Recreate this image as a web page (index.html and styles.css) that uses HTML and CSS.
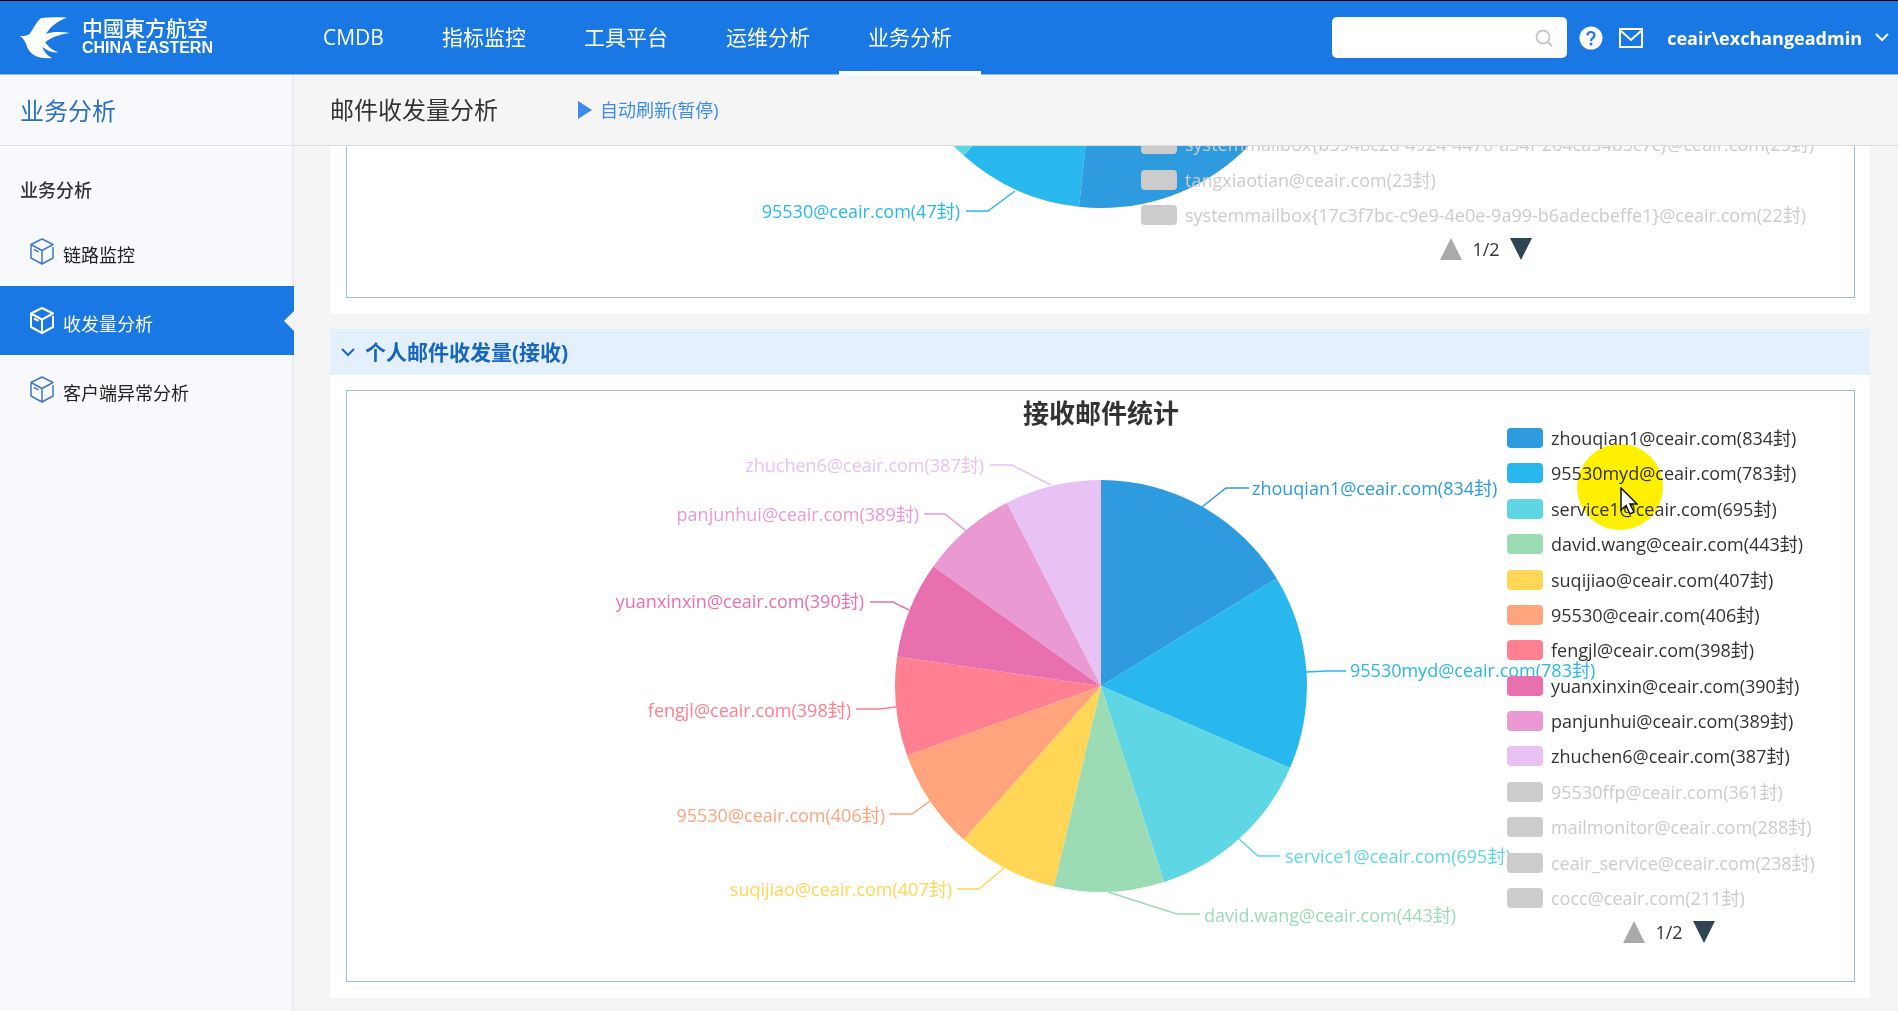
FILE: index.html
```html
<!DOCTYPE html>
<html lang="zh-CN">
<head>
<meta charset="utf-8">
<title>邮件收发量分析</title>
<link rel="stylesheet" href="styles.css">
</head>
<body>
<header class="topbar">
  <a class="brand" href="#">
    <svg class="brand-mark" viewBox="0 0 50 42" aria-hidden="true">
      <path d="M21 1C29 .2 38 0 47 .8 39 3.500 31 8.500 26 17 32 14.500 41 14.500 50 16 40 17.500 31 20 25 25.500c4 4.500 7 7.500 13.500 10-6 .3-11-1.500-16-5.500 1.500 4.500 4 8 9.500 11C20 42.500 9 38.500 6 27 5.200 24 3 21 0 19c4.500.2 7.500-.5 10-2.500C13.500 11 16 5.500 21 1z"/>
    </svg>
    <span class="brand-text">
      <span class="brand-cn">中國東方航空</span>
      <span class="brand-en">CHINA EASTERN</span>
    </span>
  </a>
  <nav class="nav">
    <a href="#">CMDB</a>
    <a href="#">指标监控</a>
    <a href="#">工具平台</a>
    <a href="#">运维分析</a>
    <a class="is-active" href="#">业务分析</a>
  </nav>
  <div class="tools">
    <div class="search">
      <input type="text" aria-label="搜索">
      <svg viewBox="0 0 18 18" width="18" height="18" aria-hidden="true"><circle cx="8" cy="8" r="6.500"/><path d="M12.500 12.500L17 17"/></svg>
    </div>
    <button class="icon-btn" type="button" aria-label="帮助">
      <svg viewBox="0 0 24 24" width="24" height="24" aria-hidden="true"><circle cx="12" cy="12" r="11.500" fill="#fff"/><path d="M8.500 9.500C8.500 4.800 15.500 5 15.500 9.200c0 2.600-3.500 2.900-3.500 5.800" fill="none" stroke="#1978e3" stroke-width="2.200"/><circle cx="12" cy="18" r="1.500" fill="#1978e3"/></svg>
    </button>
    <button class="icon-btn" type="button" aria-label="邮件">
      <svg viewBox="0 0 24 20" width="24" height="20" aria-hidden="true" fill="none" stroke="#fff" stroke-width="2"><path d="M1 1h22v18H1z"/><path d="M2 3l10 9L22 3"/></svg>
    </button>
    <button class="user" type="button">
      <span>ceair\exchangeadmin</span>
      <svg viewBox="0 0 14 9" width="14" height="9" aria-hidden="true"><path d="M1 1l6 6 6-6"/></svg>
    </button>
  </div>
</header>

<div class="body">
  <aside class="sidebar">
    <h2 class="side-title">业务分析</h2>
    <h3 class="side-group">业务分析</h3>
    <nav class="side-nav">
      <a href="#">
        <svg class="cube" viewBox="0 0 26 27" aria-hidden="true"><path d="M13 1l11 5.500-11 6L2 6.500zM13 12.500V26M2 6.500V20l11 6 11-6V9M5 11.500l4.500 2.300"/></svg>
        <span>链路监控</span>
      </a>
      <a class="is-active" href="#">
        <svg class="cube" viewBox="0 0 26 27" aria-hidden="true"><path d="M13 1l11 5.500-11 6L2 6.500zM13 12.500V26M2 6.500V20l11 6 11-6V9M5 11.500l4.500 2.300"/></svg>
        <span>收发量分析</span>
      </a>
      <a href="#">
        <svg class="cube" viewBox="0 0 26 27" aria-hidden="true"><path d="M13 1l11 5.500-11 6L2 6.500zM13 12.500V26M2 6.500V20l11 6 11-6V9M5 11.500l4.500 2.300"/></svg>
        <span>客户端异常分析</span>
      </a>
    </nav>
  </aside>

  <main class="main">
    <div class="page-head">
      <h1>邮件收发量分析</h1>
      <button class="refresh" type="button">
        <svg viewBox="0 0 14 18" width="14" height="18" aria-hidden="true"><path d="M0 0l14 9-14 9z" fill="#3d8ceb"/></svg>
        自动刷新(暂停)
      </button>
    </div>

    <div class="viewport">
      <div class="panels">
        <section class="panel">
          <div class="chart">
            <svg class="pie" viewBox="-500 -295 1000 590" role="img" aria-label="发送邮件统计">
              <path fill="#5fd6e4" d="M0 0L-137.300 153.600A206 206 0 0 1 0-206z"/>
              <path fill="#28b8ee" d="M0 0L-22 204.800A206 206 0 0 1-137.300 153.600z"/>
              <path fill="#2e9bde" d="M0 0V-206A206 206 0 1 1-22 204.800z"/>
              <g class="call c2"><path d="M-86 189L-113 209H-135"/><text class="end" x="-141" y="216">95530@ceair.com(47封)</text></g>
            </svg>
            <div class="legend legend-wide legend-tail">
              <ul>
                <li class="off"><i></i>systemmailbox{b5948c26-4924-4470-a54f-264ca54b5c7c}@ceair.com(25封)</li>
                <li class="off"><i></i>tangxiaotian@ceair.com(23封)</li>
                <li class="off"><i></i>systemmailbox{17c3f7bc-c9e9-4e0e-9a99-b6adecbeffe1}@ceair.com(22封)</li>
              </ul>
              <div class="pager">
                <button type="button" aria-label="上一页"><svg viewBox="0 0 22 22" width="22" height="22"><path d="M11 0l11 22H0z" fill="#aaa"/></svg></button>
                <span>1/2</span>
                <button type="button" aria-label="下一页"><svg viewBox="0 0 22 22" width="22" height="22"><path d="M0 0h22L11 22z" fill="#2f4554"/></svg></button>
              </div>
            </div>
          </div>
        </section>

        <section class="panel">
          <h2 class="panel-head">
            <svg viewBox="0 0 14 9" width="14" height="9" aria-hidden="true"><path d="M1 1l6 6 6-6"/></svg>
            个人邮件收发量(接收)
          </h2>
          <div class="chart">
            <svg class="pie" viewBox="-500 -295 1000 590" role="img" aria-label="接收邮件统计">
              <text class="chart-title" x="0" y="-263">接收邮件统计</text>
              <path fill="#2e9bde" d="M0 0V-206A206 206 0 0 1 175.600-107.600z"/>
              <path fill="#28b8ee" d="M0 0L175.600-107.600A206 206 0 0 1 189 81.900z"/>
              <path fill="#5fd6e4" d="M0 0L189 81.900A206 206 0 0 1 63 196.100z"/>
              <path fill="#9bdcb5" d="M0 0L63 196.100A206 206 0 0 1-47.200 200.500z"/>
              <path fill="#ffd655" d="M0 0L-47.200 200.500A206 206 0 0 1-137.300 153.600z"/>
              <path fill="#ffa47c" d="M0 0L-137.300 153.600A206 206 0 0 1-193.900 69.500z"/>
              <path fill="#fe8091" d="M0 0L-193.900 69.500A206 206 0 0 1-203.900-29.400z"/>
              <path fill="#e970ae" d="M0 0L-203.900-29.400A206 206 0 0 1-167.600-119.800z"/>
              <path fill="#ea99d2" d="M0 0L-167.600-119.800A206 206 0 0 1-94-183.300z"/>
              <path fill="#e8c2f4" d="M0 0L-94-183.300A206 206 0 0 1 0-206z"/>
              <g class="call c1"><path d="M101-179L125-198H148"/><text x="151" y="-191">zhouqian1@ceair.com(834封)</text></g>
              <g class="call c2"><path d="M205-14L226-15H245"/><text x="249" y="-9">95530myd@ceair.com(783封)</text></g>
              <g class="call c3"><path d="M138 153L157 170H179"/><text x="184" y="177">service1@ceair.com(695封)</text></g>
              <g class="call c4"><path d="M7 206L76 228H99"/><text x="103" y="236">david.wang@ceair.com(443封)</text></g>
              <g class="call c5"><path d="M-97 182L-122 203H-144"/><text class="end" x="-149" y="210">suqijiao@ceair.com(407封)</text></g>
              <g class="call c6"><path d="M-171 115L-189 128H-212"/><text class="end" x="-216" y="136">95530@ceair.com(406封)</text></g>
              <g class="call c7"><path d="M-205 21L-222 23H-245"/><text class="end" x="-250" y="31">fengjl@ceair.com(398封)</text></g>
              <g class="call c8"><path d="M-192-76L-208-84H-231"/><text class="end" x="-237" y="-78">yuanxinxin@ceair.com(390封)</text></g>
              <g class="call c9"><path d="M-135-155L-156-172H-177"/><text class="end" x="-182" y="-165">panjunhui@ceair.com(389封)</text></g>
              <g class="call c10"><path d="M-50-201L-89-221H-111"/><text class="end" x="-117" y="-214">zhuchen6@ceair.com(387封)</text></g>
            </svg>
            <div class="legend">
              <ul>
                <li class="c1"><i></i>zhouqian1@ceair.com(834封)</li>
                <li class="c2"><i></i>95530myd@ceair.com(783封)</li>
                <li class="c3"><i></i>service1@ceair.com(695封)</li>
                <li class="c4"><i></i>david.wang@ceair.com(443封)</li>
                <li class="c5"><i></i>suqijiao@ceair.com(407封)</li>
                <li class="c6"><i></i>95530@ceair.com(406封)</li>
                <li class="c7"><i></i>fengjl@ceair.com(398封)</li>
                <li class="c8"><i></i>yuanxinxin@ceair.com(390封)</li>
                <li class="c9"><i></i>panjunhui@ceair.com(389封)</li>
                <li class="c10"><i></i>zhuchen6@ceair.com(387封)</li>
                <li class="off"><i></i>95530ffp@ceair.com(361封)</li>
                <li class="off"><i></i>mailmonitor@ceair.com(288封)</li>
                <li class="off"><i></i>ceair_service@ceair.com(238封)</li>
                <li class="off"><i></i>cocc@ceair.com(211封)</li>
              </ul>
              <div class="pager">
                <button type="button" aria-label="上一页"><svg viewBox="0 0 22 22" width="22" height="22"><path d="M11 0l11 22H0z" fill="#aaa"/></svg></button>
                <span>1/2</span>
                <button type="button" aria-label="下一页"><svg viewBox="0 0 22 22" width="22" height="22"><path d="M0 0h22L11 22z" fill="#2f4554"/></svg></button>
              </div>
            </div>
            <div class="halo"></div>
            <svg class="pointer" viewBox="0 0 18 28" width="18" height="28" aria-hidden="true"><path d="M1 1v22l5-4.500 4 8.500 4-2-4-8h7z" fill="#fff" stroke="#111" stroke-width="1.500"/></svg>
          </div>
        </section>
      </div>
    </div>
  </main>
</div>
</body>
</html>
```
FILE: styles.css
```css
* { box-sizing: border-box; }

body {
  margin: 0;
  height: 100vh;
  display: flex;
  flex-direction: column;
  overflow: hidden;
  background: #f5f5f5;
  color: #333;
  font: 18px/24px "Open Sans", "Noto Sans CJK SC", sans-serif;
}

h1, h2, h3, ul { margin: 0; padding: 0; font-weight: 400; list-style: none; }
a { color: inherit; text-decoration: none; }
button { border: 0; padding: 0; background: none; color: inherit; font: inherit; display: flex; align-items: center; cursor: pointer; }

/* top bar */
.topbar {
  flex: none;
  display: flex;
  height: 75px;
  border-top: 1px solid #000;
  border-bottom: 1px solid #8fbdf2;
  background: #1978e3;
  color: #fff;
}
.brand { flex: none; width: 294px; padding-left: 20px; display: flex; align-items: center; gap: 12px; }
.brand-mark { width: 50px; height: 42px; fill: #fff; }
.brand-text { display: flex; flex-direction: column; font-weight: 700; }
.brand-cn { font-size: 21px; font-weight: 500; line-height: 20px; }
.brand-en { font-family: "Liberation Sans", sans-serif; font-size: 16px; line-height: 20px; }
.nav { display: flex; font-size: 21px; }
.nav a { padding: 0 29px; line-height: 73px; white-space: nowrap; }
.nav .is-active { box-shadow: inset 0 -3px #fff, 0 1px #fff; }
.tools { margin-left: auto; padding-right: 9px; display: flex; align-items: center; }
.search { width: 235px; height: 41px; padding: 0 14px; display: flex; align-items: center; background: #fff; border-radius: 5px; margin-right: 12px; }
.search input { flex: 1; min-width: 0; border: 0; outline: 0; background: none; font: inherit; }
.search svg { fill: none; stroke: #c4c8ce; stroke-width: 2; }
.icon-btn { margin-right: 16px; }
.user { margin-left: 8px; gap: 13px; font-weight: 700; }
.user svg, .panel-head svg { fill: none; stroke: currentColor; stroke-width: 2; }

/* layout */
.body { flex: 1; min-height: 0; display: flex; }
.sidebar { flex: none; width: 294px; background: #f7f9fc; border-right: 2px solid #ebedf0; }
.side-title { height: 71px; padding-left: 20px; border-bottom: 1px solid #dcdfe3; color: #2a6fc4; font-size: 24px; line-height: 72px; }
.side-group { height: 71px; padding: 32px 0 0 20px; font-size: 18px; font-weight: 500; }
.side-nav a { height: 69px; padding-left: 29px; margin-right: -2px; display: flex; align-items: center; gap: 8px; color: #222; }
.side-nav span { padding-top: 6px; }
.cube { width: 26px; height: 27px; fill: none; stroke: #4478c8; stroke-width: 1.5; stroke-linejoin: round; }
.side-nav .is-active { background: #1978e3; color: #fff; }
.side-nav .is-active .cube { stroke: #fff; stroke-width: 2; }
.side-nav .is-active::after { content: ""; margin-left: auto; border: 10px solid transparent; border-left: 0; border-right-color: #f5f5f5; }

.main { flex: 1; min-width: 0; display: flex; flex-direction: column; }
.page-head { flex: none; height: 71px; padding-left: 36px; display: flex; align-items: center; gap: 80px; border-bottom: 1px solid #dcdcdc; }
.page-head h1 { font-size: 24px; line-height: 32px; }
.refresh { gap: 8px; color: #3d8ceb; }

/* scrolled panel list: the first panel starts above the visible area */
.viewport { flex: 1; min-height: 0; overflow: hidden; }
.panels { margin: -502px 28px 0 36px; display: flex; flex-direction: column; gap: 15px; }
.panel { background: #fff; padding-bottom: 16px; }
.panel:first-child { padding-top: 62px; }
.panel-head { height: 46px; padding-left: 11px; margin-bottom: 15px; display: flex; align-items: center; gap: 10px; background: #e4f0fc; color: #1766c0; font-size: 21px; font-weight: 700; }

.chart { position: relative; margin: 0 15px 0 16px; height: 592px; border: 1px solid #9dbfe6; display: grid; }
.chart > .pie, .chart > .legend { grid-area: 1 / 1; }
.pie { width: 1000px; height: 590px; justify-self: center; overflow: visible; }
.chart-title { text-anchor: middle; font-size: 26px; font-weight: 700; fill: #333; }
.call path { fill: none; stroke: var(--c); stroke-width: 1.5; }
.call text { fill: var(--c); }
.call .end { text-anchor: end; }

.legend { z-index: 1; justify-self: end; width: 324px; margin-right: 23px; padding-top: 37px; }
.legend-wide { width: 690px; }
.legend ul { height: 480px; display: flex; flex-direction: column; justify-content: space-between; }
.legend-tail ul { height: 91px; }
.legend-tail { align-self: end; padding: 0 0 36px; }
.legend li { height: 20px; display: flex; align-items: center; gap: 8px; white-space: nowrap; }
.legend i { width: 36px; height: 20px; border-radius: 4px; background: var(--c); }
.legend .off { --c: #ccc; color: #ccc; }
.pager { margin-top: 12px; display: flex; justify-content: center; align-items: center; gap: 10px; }

.c1 { --c: #2e9bde; }
.c2 { --c: #28b8ee; }
.c3 { --c: #5fd6e4; }
.c4 { --c: #9bdcb5; }
.c5 { --c: #ffd655; }
.c6 { --c: #ffa47c; }
.c7 { --c: #fe8091; }
.c8 { --c: #e970ae; }
.c9 { --c: #ea99d2; }
.c10 { --c: #e8c2f4; }

/* mouse highlight */
.halo { position: absolute; z-index: 2; top: 53px; right: 191px; width: 86px; height: 86px; border-radius: 50%; background: #fff000; mix-blend-mode: multiply; }
.pointer { position: absolute; z-index: 3; top: 96px; right: 216px; }
```
